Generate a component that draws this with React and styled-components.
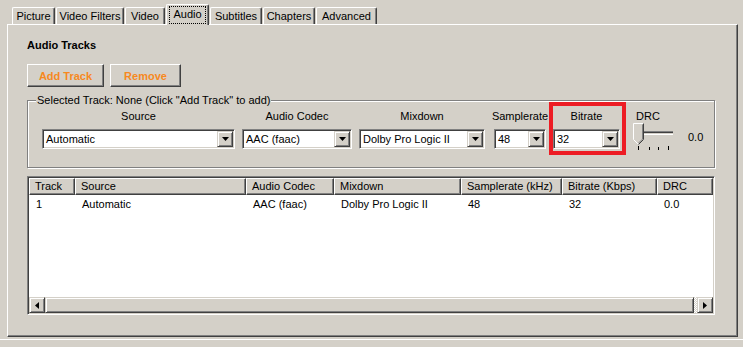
import React from "react";
import styled, { createGlobalStyle } from "styled-components";

// classic 3d face colours
const FACE = "#d4d0c8";
const SHADOW = "#808080";
const DARK = "#404040";

const GlobalStyle = createGlobalStyle`
  html, body {
    margin: 0;
    padding: 0;
    background: ${FACE};
  }
  body {
    font-family: "Liberation Sans", Arial, sans-serif;
    font-size: 11px;
    color: #000;
    overflow: hidden;
  }
`;

const Window = styled.div`
  width: 743px;
  height: 347px;
  overflow: hidden;
  background: ${FACE};
  display: flex;
  flex-direction: column;
`;

const TabStrip = styled.div`
  display: flex;
  align-items: flex-end;
  height: 24px;
  padding-left: 12px;
  position: relative;
  z-index: 1;
`;

const Tab = styled.div`
  box-sizing: border-box;
  width: ${(p) => p.$w}px;
  height: ${(p) => (p.$active ? 21 : 17)}px;
  margin-right: 1px;
  margin-bottom: ${(p) => (p.$active ? -1 : 0)}px;
  border-top: 1px solid #fff;
  border-left: 1px solid #fff;
  border-right: 1px solid ${DARK};
  box-shadow: inset -1px 0 0 ${SHADOW};
  border-radius: 2px 2px 0 0;
  background: ${FACE};
  display: flex;
  align-items: ${(p) => (p.$active ? "flex-start" : "center")};
  justify-content: center;
  line-height: 13px;
  white-space: nowrap;
`;

const FocusLabel = styled.span`
  box-sizing: border-box;
  margin-top: 1px;
  height: 18px;
  padding: 1px 3px 0;
  border: 1px dotted #000;
`;

const Panel = styled.div`
  box-sizing: border-box;
  margin-left: 7px;
  width: 731px;
  height: 313px;
  border-top: 1px solid #fff;
  border-left: 1px solid #fff;
  border-right: 1px solid ${DARK};
  border-bottom: 1px solid ${DARK};
  box-shadow: inset -1px -1px 0 ${SHADOW};
  padding: 14px 0 0 19px;
`;

const Heading = styled.div`
  font-weight: bold;
  line-height: 13px;
  height: 13px;
`;

const ButtonRow = styled.div`
  display: flex;
  gap: 6px;
  margin-top: 12px;
`;

const Button = styled.button`
  box-sizing: border-box;
  width: ${(p) => p.$w}px;
  height: 23px;
  padding: 0;
  background: ${FACE};
  border-top: 1px solid #fff;
  border-left: 1px solid #fff;
  border-right: 1px solid ${DARK};
  border-bottom: 1px solid ${DARK};
  box-shadow: inset -1px -1px 0 ${SHADOW};
  border-radius: 0;
  font-family: inherit;
  font-size: 11px;
  font-weight: bold;
  color: #f7891f;
`;

const Group = styled.fieldset`
  box-sizing: border-box;
  width: 688px;
  height: 74px;
  margin: 7px 0 0;
  padding: 0;
  min-inline-size: 0;
  border: 1px solid ${SHADOW};
  box-shadow: inset 1px 1px 0 #fff, 1px 1px 0 #fff;
`;

const Legend = styled.legend`
  margin-left: 8px;
  padding: 0 1px;
  line-height: 13px;
  background: ${FACE};
`;

const ControlRow = styled.div`
  display: flex;
  align-items: flex-start;
  padding: 3px 0 0 14px;
`;

const Column = styled.div`
  display: flex;
  flex-direction: column;
  align-items: center;
  gap: 6px;
  width: ${(p) => p.$w}px;
  flex: none;
  margin-right: ${(p) => p.$gap || 0}px;
`;

// red marker drawn round the bitrate control
const Highlight = styled(Column)`
  box-sizing: border-box;
  margin: -8px 7px -6px 0;
  padding: 4px 2px 2px 0;
  border: 4px solid #ed1c24;
`;

const Label = styled.div`
  line-height: 13px;
  height: 13px;
  white-space: nowrap;
`;

const Combo = styled.div`
  box-sizing: border-box;
  width: ${(p) => p.$w}px;
  height: 20px;
  display: flex;
  align-items: center;
  background: #fff;
  border-top: 1px solid ${SHADOW};
  border-left: 1px solid ${SHADOW};
  border-right: 1px solid #fff;
  border-bottom: 1px solid #fff;
  box-shadow: inset 1px 1px 0 ${DARK}, inset -1px -1px 0 ${FACE};
  padding: 1px;
`;

const ComboText = styled.div`
  flex: 1;
  padding-left: 2px;
  line-height: 16px;
  white-space: nowrap;
  overflow: hidden;
`;

const ArrowButton = styled.div`
  box-sizing: border-box;
  width: 16px;
  height: 16px;
  display: flex;
  align-items: center;
  justify-content: center;
  background: ${FACE};
  border-top: 1px solid ${FACE};
  border-left: 1px solid ${FACE};
  border-right: 1px solid ${DARK};
  border-bottom: 1px solid ${DARK};
  box-shadow: inset 1px 1px 0 #fff, inset -1px -1px 0 ${SHADOW};
`;

const DrcColumn = styled.div`
  display: flex;
  flex-direction: column;
`;

const DrcLabel = styled(Label)`
  padding-left: 3px;
`;

const SliderRow = styled.div`
  display: flex;
  align-items: flex-start;
`;

const SliderValue = styled.div`
  margin: 8px 0 0 11px;
  line-height: 13px;
`;

const ListView = styled.div`
  box-sizing: border-box;
  width: 688px;
  height: 139px;
  margin-top: 8px;
  display: flex;
  flex-direction: column;
  background: #fff;
  border-top: 1px solid ${SHADOW};
  border-left: 1px solid ${SHADOW};
  border-right: 1px solid #fff;
  border-bottom: 1px solid #fff;
  box-shadow: inset 1px 1px 0 ${DARK}, inset -1px -1px 0 ${FACE};
  padding: 1px;
`;

const COLS = "46px 171px 88px 127px 101px 95px 1fr";

const HeaderRow = styled.div`
  display: grid;
  grid-template-columns: ${COLS};
  height: 17px;
`;

const HeaderCell = styled.div`
  box-sizing: border-box;
  background: ${FACE};
  border-top: 1px solid #fff;
  border-left: 1px solid #fff;
  border-right: 1px solid ${DARK};
  border-bottom: 1px solid ${DARK};
  box-shadow: inset -1px -1px 0 ${SHADOW};
  padding-left: 5px;
  line-height: 14px;
  white-space: nowrap;
  overflow: hidden;
`;

const Rows = styled.div`
  flex: 1;
  background: #fff;
`;

const DataRow = styled.div`
  display: grid;
  grid-template-columns: ${COLS};
  height: 16px;
  margin-top: 1px;
`;

const DataCell = styled.div`
  padding-left: 7px;
  line-height: 16px;
  white-space: nowrap;
  overflow: hidden;
`;

const ScrollBar = styled.div`
  display: flex;
  height: 16px;
  background: ${FACE};
`;

const ScrollButton = styled(ArrowButton)``;

const Thumb = styled.div`
  box-sizing: border-box;
  flex: 1;
  background: ${FACE};
  border-top: 1px solid ${FACE};
  border-left: 1px solid ${FACE};
  border-right: 1px solid ${DARK};
  border-bottom: 1px solid ${DARK};
  box-shadow: inset 1px 1px 0 #fff, inset -1px -1px 0 ${SHADOW};
`;

const Track = styled.div`
  width: 3px;
  background: repeating-conic-gradient(#fff 0 25%, ${FACE} 0 50%) 0 0 / 2px 2px;
`;

const Footer = styled.div`
  margin-top: 2px;
  flex: 1;
  border-top: 1px solid #fff;
`;

const DownArrow = () => (
  <svg width="7" height="4" viewBox="0 0 7 4">
    <path d="M0 0h7L3.5 4z" fill="#000" />
  </svg>
);

const SideArrow = ({ dir }) => (
  <svg width="4" height="7" viewBox="0 0 4 7">
    <path d={dir === "left" ? "M4 0v7L0 3.5z" : "M0 0v7l4-3.5z"} fill="#000" />
  </svg>
);

const Select = ({ w, value }) => (
  <Combo $w={w}>
    <ComboText>{value}</ComboText>
    <ArrowButton>
      <DownArrow />
    </ArrowButton>
  </Combo>
);

const Slider = () => (
  <svg width="44" height="28" viewBox="0 0 44 28">
    {/* track */}
    <rect x="1" y="8" width="39" height="1" fill={SHADOW} />
    <rect x="1" y="9" width="39" height="1" fill={DARK} />
    <rect x="1" y="10" width="39" height="1" fill={FACE} />
    <rect x="1" y="11" width="39" height="1" fill="#fff" />
    {/* thumb */}
    <path d="M0.5 0.5h10v16l-5 5l-5-5z" fill={FACE} stroke="#fff" />
    <path d="M10.5 0.5v16l-5 5" fill="none" stroke={DARK} />
    <path d="M9.5 1.5v14.6l-4 4" fill="none" stroke={SHADOW} />
    {/* ticks */}
    <rect x="5" y="23" width="1" height="4" fill="#000" />
    <rect x="16" y="24" width="1" height="3" fill="#000" />
    <rect x="25" y="24" width="1" height="3" fill="#000" />
    <rect x="35" y="23" width="1" height="4" fill="#000" />
  </svg>
);

const tabs = [
  { name: "Picture", w: 43 },
  { name: "Video Filters", w: 68 },
  { name: "Video", w: 40 },
  { name: "Audio", w: 43, active: true },
  { name: "Subtitles", w: 52 },
  { name: "Chapters", w: 52 },
  { name: "Advanced", w: 61 },
];

const columns = [
  "Track",
  "Source",
  "Audio Codec",
  "Mixdown",
  "Samplerate (kHz)",
  "Bitrate (Kbps)",
  "DRC",
];

const tracks = [["1", "Automatic", "AAC (faac)", "Dolby Pro Logic II", "48", "32", "0.0"]];

const App = () => (
  <Window>
    <GlobalStyle />
    <TabStrip>
      {tabs.map((t) => (
        <Tab key={t.name} $w={t.w} $active={t.active}>
          {t.active ? <FocusLabel>{t.name}</FocusLabel> : t.name}
        </Tab>
      ))}
    </TabStrip>
    <Panel>
      <Heading>Audio Tracks</Heading>
      <ButtonRow>
        <Button $w={77}>Add Track</Button>
        <Button $w={71}>Remove</Button>
      </ButtonRow>
      <Group>
        <Legend>Selected Track: None (Click "Add Track" to add)</Legend>
        <ControlRow>
          <Column $w={193} $gap={7}>
            <Label>Source</Label>
            <Select w={193} value="Automatic" />
          </Column>
          <Column $w={110} $gap={7}>
            <Label>Audio Codec</Label>
            <Select w={110} value="AAC (faac)" />
          </Column>
          <Column $w={126} $gap={9}>
            <Label>Mixdown</Label>
            <Select w={126} value="Dolby Pro Logic II" />
          </Column>
          <Column $w={52} $gap={3}>
            <Label>Samplerate</Label>
            <Select w={52} value="48" />
          </Column>
          <Highlight $w={77}>
            <Label>Bitrate</Label>
            <Select w={67} value="32" />
          </Highlight>
          <DrcColumn>
            <DrcLabel>DRC</DrcLabel>
            <SliderRow>
              <Slider />
              <SliderValue>0.0</SliderValue>
            </SliderRow>
          </DrcColumn>
        </ControlRow>
      </Group>
      <ListView>
        <HeaderRow>
          {columns.map((c) => (
            <HeaderCell key={c}>{c}</HeaderCell>
          ))}
        </HeaderRow>
        <Rows>
          {tracks.map((row, i) => (
            <DataRow key={i}>
              {row.map((v, j) => (
                <DataCell key={j}>{v}</DataCell>
              ))}
            </DataRow>
          ))}
        </Rows>
        <ScrollBar>
          <ScrollButton>
            <SideArrow dir="left" />
          </ScrollButton>
          <Thumb />
          <Track />
          <ScrollButton>
            <SideArrow dir="right" />
          </ScrollButton>
        </ScrollBar>
      </ListView>
    </Panel>
    <Footer />
  </Window>
);

export default App;
